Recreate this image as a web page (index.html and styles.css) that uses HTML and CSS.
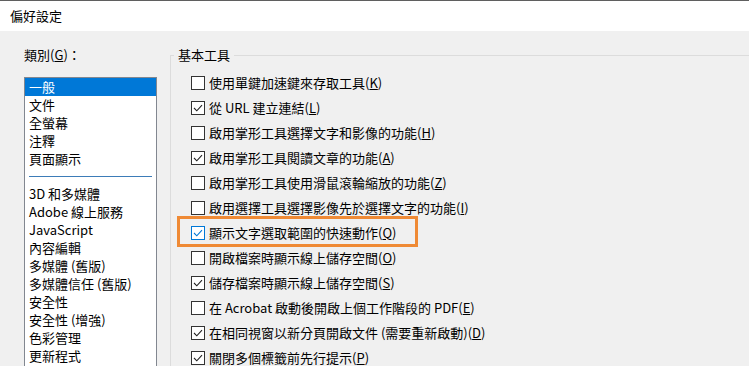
FILE: index.html
```html
<!DOCTYPE html>
<html lang="zh-Hant">
<head>
    <meta charset="UTF-8">
    <meta name="viewport" content="width=device-width, initial-scale=1.0">
    <title>偏好設定</title>
    <link rel="stylesheet" href="styles.css">
</head>
<body>
    <div class="titlebar">偏好設定</div>
    <div class="content">
        <div class="category">
            <div class="category-label">類別(<u>G</u>)：</div>
            <ul class="category-list">
                <li class="selected">一般</li>
                <li>文件</li>
                <li>全螢幕</li>
                <li>注釋</li>
                <li>頁面顯示</li>
                <li class="separator"></li>
                <li>3D 和多媒體</li>
                <li>Adobe 線上服務</li>
                <li>JavaScript</li>
                <li>內容編輯</li>
                <li>多媒體 (舊版)</li>
                <li>多媒體信任 (舊版)</li>
                <li>安全性</li>
                <li>安全性 (增強)</li>
                <li>色彩管理</li>
                <li>更新程式</li>
            </ul>
        </div>
        <fieldset class="group">
            <legend>基本工具</legend>
            <div class="option"><span class="box"></span>使用單鍵加速鍵來存取工具(<u>K</u>)</div>
            <div class="option"><span class="box checked"><svg viewBox="0 0 12 12"><polyline points="2,6 4.8,8.8 10,3.2"/></svg></span>從 URL 建立連結(<u>L</u>)</div>
            <div class="option"><span class="box"></span>啟用掌形工具選擇文字和影像的功能(<u>H</u>)</div>
            <div class="option"><span class="box checked"><svg viewBox="0 0 12 12"><polyline points="2,6 4.8,8.8 10,3.2"/></svg></span>啟用掌形工具閱讀文章的功能(<u>A</u>)</div>
            <div class="option"><span class="box"></span>啟用掌形工具使用滑鼠滾輪縮放的功能(<u>Z</u>)</div>
            <div class="option"><span class="box"></span>啟用選擇工具選擇影像先於選擇文字的功能(<u>I</u>)</div>
            <div class="option highlight"><span class="box checked focus"><svg viewBox="0 0 12 12"><polyline points="2,6 4.8,8.8 10,3.2"/></svg></span>顯示文字選取範圍的快速動作(<u>Q</u>)</div>
            <div class="option"><span class="box"></span>開啟檔案時顯示線上儲存空間(<u>O</u>)</div>
            <div class="option"><span class="box checked"><svg viewBox="0 0 12 12"><polyline points="2,6 4.8,8.8 10,3.2"/></svg></span>儲存檔案時顯示線上儲存空間(<u>S</u>)</div>
            <div class="option"><span class="box"></span>在 Acrobat 啟動後開啟上個工作階段的 PDF(<u>E</u>)</div>
            <div class="option"><span class="box checked"><svg viewBox="0 0 12 12"><polyline points="2,6 4.8,8.8 10,3.2"/></svg></span>在相同視窗以新分頁開啟文件 (需要重新啟動)(<u>D</u>)</div>
            <div class="option"><span class="box checked"><svg viewBox="0 0 12 12"><polyline points="2,6 4.8,8.8 10,3.2"/></svg></span>關閉多個標籤前先行提示(<u>P</u>)</div>
        </fieldset>
    </div>
</body>
</html>
```
FILE: styles.css
```css
body {
    margin: 0;
    width: 749px;
    height: 366px;
    overflow: hidden;
    background-color: #f0f0f0;
    font-family: "Noto Sans CJK TC", sans-serif;
    font-size: 13px;
    color: #000;
}

.titlebar {
    height: 30px;
    line-height: 30px;
    padding-left: 10px;
    background-color: #fff;
    border-top: 1px solid #5f5f5f;
}

.content {
    display: flex;
    align-items: flex-start;
    padding: 15px 0 0 24px;
}

.category {
    width: 133px;
    flex: none;
}

.category-label {
    line-height: 18px;
    height: 18px;
    margin-bottom: 13px;
}

.category-list {
    list-style: none;
    margin: 0;
    padding: 0;
    height: 320px;
    background-color: #fff;
    border: 1px solid #828790;
}

.category-list li {
    height: 18px;
    line-height: 18px;
    padding-left: 4px;
    white-space: nowrap;
}

.category-list .selected {
    background-color: #0078d7;
    color: #fff;
}

.category-list .separator {
    height: 17px;
    padding: 0;
    margin: 0 4px;
    position: relative;
}

.category-list .separator::after {
    content: "";
    position: absolute;
    left: 0;
    right: 0;
    top: 8px;
    border-top: 1px solid #3d7cb8;
}

.group {
    flex: none;
    width: 700px;
    height: 400px;
    margin: 0 0 0 13px;
    padding: 6px 0 0 20px;
    border: 1px solid #dcdcdc;
}

.group legend {
    line-height: 18px;
    padding: 0 4px;
    margin-left: -17px;
}

.option {
    position: relative;
    display: flex;
    align-items: center;
    height: 25px;
    white-space: nowrap;
}

.box {
    width: 12px;
    height: 12px;
    margin-right: 4px;
    border: 1px solid #333;
    background-color: #fff;
    flex: none;
}

.box svg {
    display: block;
    width: 12px;
    height: 12px;
}

.box polyline {
    fill: none;
    stroke: #222;
    stroke-width: 1.1;
}

.box.focus {
    border-color: #0078d7;
}

.box.focus polyline {
    stroke: #0078d7;
}

.highlight::after {
    content: "";
    position: absolute;
    left: -14px;
    top: -4px;
    width: 235px;
    height: 25px;
    border: 3px solid #ef8a35;
}
```
